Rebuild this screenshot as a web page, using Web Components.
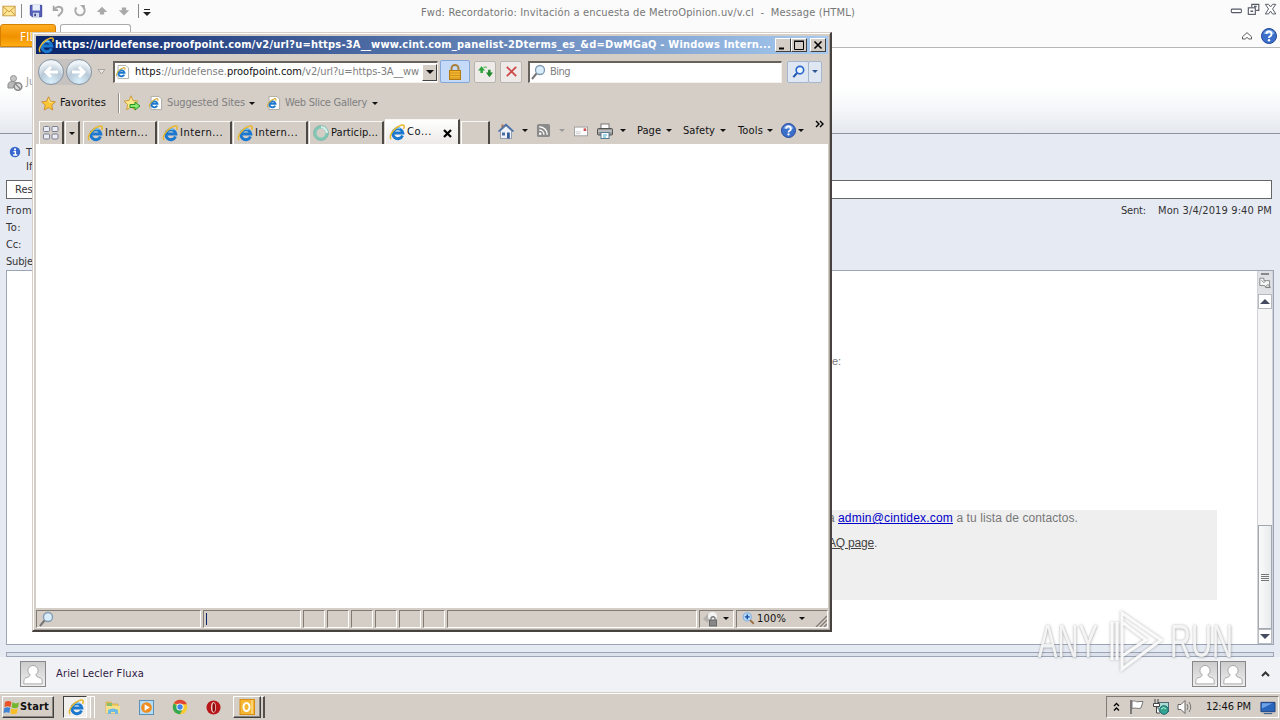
<!DOCTYPE html>
<html lang="en">
<head>
<meta charset="utf-8">
<title>Desktop</title>
<style>
  html, body { margin: 0; width: 1280px; height: 720px; overflow: hidden; }
  body { font: 11px/14px "DejaVu Sans Condensed", "DejaVu Sans", sans-serif; color: #111; }
</style>
</head>
<body>
<desk-top></desk-top>

<script>
const ICONS = {
  ie: `<path d="M13.500 11.500A5 5 0 1 1 13.800 9H5" fill="none" stroke="#1b78cf" stroke-width="3"/><path d="M4.500 6.500a5 5 0 0 1 7-1.800" stroke="#6cc4fb" stroke-width="1.400" fill="none"/><path d="M2.300 15.200C-1.500 12.500 6 2.500 13 1c3-.5 2.600 2 1.500 4" fill="none" stroke="#e9b72c" stroke-width="1.500"/>`,
  iepage: `<path d="M3.500.5h9l3 3v12h-12z" fill="#fff" stroke="#a7a7a0"/><path d="M10.500 11A3.500 3.500 0 1 1 10.800 8.800H5" fill="none" stroke="#1c78cc" stroke-width="2.200"/><path d="M2 13C0 11 5 4 10 3c2 0 1.500 2 1 3" fill="none" stroke="#d5b244" stroke-width="1.200"/>`,
  star: `<path d="M8 .8l2.200 4.800 5.200.6-3.900 3.500 1.100 5.300L8 12.400 3.400 15l1.100-5.300L.6 6.200l5.200-.6z" fill="#fcc536" stroke="#c9872a" stroke-width=".9"/><path d="M8 3l1 3.500 3 .5" stroke="#fff0a8" fill="none"/>`,
  staradd: `<path d="M7 .8l2 4.700 5 .6-3.700 3.400 1 5.200L7 12.200 2.600 14.700l1-5.200L0 6.100l5-.6z" fill="#fde78b" stroke="#cb9530" stroke-width=".9"/><path d="M6 9.500h5V7l5 4-5 4v-2.500H6z" fill="#8be870" stroke="#279323"/>`,
  quad: `<g fill="#ecedf2" stroke="#7a7f93"><rect x=".5" y="1.500" width="6" height="5" rx="1"/><rect x="9" y="1.500" width="6" height="5" rx="1"/><rect x=".5" y="9" width="6" height="5" rx="1"/><rect x="9" y="9" width="6" height="5" rx="1"/></g>`,
  ring: `<circle cx="8" cy="8" r="6" fill="none" stroke="#80c8b5" stroke-width="3"/><path d="M8 2a6 6 0 0 1 6 6" fill="none" stroke="#d3eee9" stroke-width="2.500"/><circle cx="8" cy="8" r="7.500" fill="none" stroke="#68a997" stroke-width=".5"/>`,
  lock: `<path d="M4.500 7V4.500a3.500 3.500 0 0 1 7 0V7" fill="none" stroke="#a9813b" stroke-width="2"/><rect x="2.500" y="6.500" width="11" height="9" fill="#f2b62d" stroke="#b57a12"/><path d="M3 9h10M3 11.500h10M3 14h10" stroke="#c98b1c" stroke-width=".8"/>`,
  refresh: `<path d="M0 7L3.800 2.500 7.500 7H5.200v2.500H2.600V7z" fill="#2da43a"/><path d="M6 3.500h3.500" stroke="#6fc46d" stroke-width="1.500"/><path d="M16 9L12.200 14 8.500 9h2.300V6h2.600v3z" fill="#21882e"/>`,
  stop: `<path d="M3 3l10 10M13 3L3 13" stroke="#ce4b4b" stroke-width="2"/>`,
  lens: `<circle cx="10" cy="6" r="4.500" fill="#d9edfb" stroke="#7f9ab0" stroke-width="1.300"/><path d="M6.500 9.500L2 15" stroke="#777" stroke-width="2"/>`,
  lensblue: `<circle cx="9.500" cy="6.500" r="4" fill="#eef6ff" stroke="#2b6acc" stroke-width="1.800"/><path d="M6.500 9.500L2.500 14" stroke="#2357ae" stroke-width="2.200"/>`,
  home: `<path d="M2.500 8v7.500h11V8L8 3z" fill="#eef2f8" stroke="#7d8ba5" stroke-width=".8"/><path d="M.5 8.500L8 1.500l7.500 7" fill="none" stroke="#3f6ba8" stroke-width="1.600"/><path d="M3.500 5V1.500h2V3" fill="#a46c4b"/><rect x="4" y="9.500" width="3" height="3" fill="#4b6f9f"/><rect x="9" y="9.500" width="2.800" height="6" fill="#345c98"/>`,
  rss: `<rect x="1" y="1" width="14" height="14" rx="2" fill="#8b8b8b"/><circle cx="4.500" cy="11.500" r="1.400" fill="#fff"/><path d="M3.500 7.500a5 5 0 0 1 5 5M3.500 4a8.500 8.500 0 0 1 8.500 8.500" fill="none" stroke="#fff" stroke-width="1.500"/>`,
  mail: `<rect x=".5" y="3.500" width="15" height="10" fill="#fdfdfd" stroke="#999"/><path d="M2 9h6M2 11h5" stroke="#ccc"/><path d="M11 5h3v3h-3z" fill="#cd4d53"/>`,
  print: `<rect x="4" y="1" width="8" height="5" fill="#fff" stroke="#777"/><rect x=".5" y="5.500" width="15" height="6.500" rx="1" fill="#999" stroke="#555"/><path d="M1 8h14" stroke="#ddd"/><rect x="4" y="9.500" width="8" height="6" fill="#fff" stroke="#557b93"/><path d="M6 12h4M6 14h3" stroke="#4aabca"/>`,
  help: `<circle cx="8" cy="8" r="7.500" fill="#3b6fc9" stroke="#26499a"/><path d="M2.500 6a5.800 5.800 0 0 1 11 0" fill="#81abea"/><path d="M5.500 6a2.500 2.500 0 1 1 3.500 2.300q-1 .5-1 1.700" fill="none" stroke="#fff" stroke-width="1.900"/><circle cx="8" cy="12.200" r="1.200" fill="#fff"/>`,
  info: `<circle cx="8" cy="8" r="7" fill="#3a67cd"/><circle cx="8" cy="4.500" r="1.400" fill="#fff"/><path d="M6 7.500h2.500V12M5.500 12h5.500" stroke="#fff" stroke-width="1.800" fill="none"/>`,
  envelope: `<rect x="1" y="2.500" width="14" height="11" fill="#ffe796" stroke="#c5973d"/><path d="M1 3l7 6 7-6M1 13l5-5.500M15 13l-5-5.500" fill="none" stroke="#c98f32"/>`,
  save: `<path d="M1.500 1.500h13v13h-11l-2-2z" fill="#555fbb" stroke="#333f93"/><rect x="4" y="1" width="8.500" height="6.500" fill="#e9eefc"/><rect x="4.500" y="10" width="7" height="5" fill="#cdd4ec"/><path d="M6 11h2v3H6z" fill="#3b438c"/>`,
  undo: `<path d="M3 2v5h5" fill="none" stroke="#a3a3a3" stroke-width="2"/><path d="M3.500 6C8 1.500 13 3 13 7c0 3-3 4.500-5 7" fill="none" stroke="#a9a9a9" stroke-width="2.300"/>`,
  redo: `<path d="M4 4a5.300 5.300 0 1 0 8 0" fill="none" stroke="#acacac" stroke-width="2.400"/><path d="M8 1h5.500v5.500z" fill="#a7a7a7"/>`,
  up: `<path d="M2 9l6-6 6 6h-3.500v3h-5V9z" fill="#a9a9a9"/>`,
  down: `<path d="M2 7l6 6 6-6h-3.500V4h-5v3z" fill="#a9a9a9"/>`,
  junk: `<circle cx="6.500" cy="3.500" r="3" fill="#c6c6c6" stroke="#929292"/><path d="M1 13V9q1-3 5-2.500l4 1.500-4 5z" fill="#b9b9b9" stroke="#8f8f8f"/><circle cx="11" cy="11.500" r="3.800" fill="#ddd" stroke="#888" stroke-width="1.500"/><path d="M8.500 9l5 5" stroke="#888" stroke-width="1.300"/>`,
  person: `<path d="M5.800 8c0 2-1 2.300-3 2.800-1.200.4-1.500 1.400-1.500 4.400h13.400c0-3-.3-4-1.500-4.400-2-.5-3-.8-3-2.800" fill="#fff" stroke="#999" stroke-width=".6"/><circle cx="8" cy="5.500" r="3.700" fill="#fff" stroke="#999" stroke-width=".6"/><path d="M6.300 7.500h3.400v3H6.300z" fill="#fff"/>`,
  flagwin: `<path d="M1 3q3.500-2 6.500 0L6.500 8Q4 6.500.5 8z" fill="#e85229"/><path d="M8.500 3.300q3 2 6.500.3l-1 5q-3.500 1.500-6.500-.3z" fill="#74b72f"/><path d="M.3 9Q4 7.500 6.300 9l-1 5Q3 12.500-.5 14z" fill="#3f83d4"/><path d="M7.300 9.300q3 1.800 6.500.3l-1 5q-3.500 1.500-6.500-.3z" fill="#f7bf27"/>`,
  folder: `<path d="M1 3h5l1 2h6v9H1z" fill="#f0cd61" stroke="#d4a83c" stroke-width=".7"/><path d="M2 4h5v3H2z" fill="#86bd6f"/><path d="M1 7h14v7H1z" fill="#f7e08d"/><path d="M3 15v-4q5-3 10 0v4h-3v-2H6v2z" fill="#6dbae2"/>`,
  media: `<rect x=".5" y=".5" width="15" height="15" fill="#b5dcf6" stroke="#548cb7"/><circle cx="8" cy="8" r="5.700" fill="#ef8c1e"/><path d="M6 4.500v7L11.500 8z" fill="#fff"/>`,
  chrome: `<circle cx="8" cy="8" r="6.500" fill="#f6ca30"/><path d="M2.400 4.800A6.500 6.500 0 0 1 14 5.500H8z" fill="#e04436"/><path d="M2.400 4.800A6.500 6.500 0 0 0 8 14.500l2.500-5z" fill="#35a853"/><circle cx="8" cy="8" r="3.200" fill="#fff"/><circle cx="8" cy="8" r="2.400" fill="#4285e8"/>`,
  opera: `<circle cx="8" cy="8" r="7.500" fill="#b91619"/><ellipse cx="8" cy="8" rx="2.600" ry="5.500" fill="#f3dfd9"/><ellipse cx="8.300" cy="8" rx="1.500" ry="4.800" fill="#8c080d"/>`,
  outlook: `<rect x="1" y=".5" width="14.500" height="15" fill="#f7b632" stroke="#d98d12"/><ellipse cx="7.500" cy="8" rx="3" ry="4" fill="none" stroke="#fff" stroke-width="2"/><path d="M13 1v14" stroke="#fff0b7"/>`,
  flag: `<path d="M3 1v14" stroke="#666" stroke-width="1.600"/><path d="M4 2.500c3-2 4 1.500 7 0h4L13 9c-3 1.500-5-1-9 .5z" fill="#fff" stroke="#777"/>`,
  network: `<rect x="5" y="3.500" width="10.500" height="9" fill="#a7ddd0" stroke="#567"/><path d="M2 0v5M5 0v5M.5 4.500h6v3h-6zM3.500 8v6H7" fill="#fff" stroke="#444"/><circle cx="11" cy="11" r="4.300" fill="#35a48e" stroke="#267"/><path d="M8 10q3-3 5 0" stroke="#b5f5d9" fill="none"/>`,
  sound: `<path d="M1 5.500h3L8 1.500v13l-4-4H1z" fill="#fff" stroke="#666"/><path d="M10 5q2 3 0 6M12 3q3.500 5 0 10" fill="none" stroke="#777"/>`,
  monitor: `<path d="M1 2.500h15v10H1z" fill="#2b66bd" stroke="#173d79"/><path d="M2 3.500h11L2 9z" fill="#6ea3e8"/><path d="M4 14.500h9" stroke="#284e81"/>`,
  shield: `<path d="M0 8l5-5.500V5h3v5H5v2z" fill="#b4b1ae"/><circle cx="9.500" cy="5.500" r="4.500" fill="#f3f3f3"/><rect x="6.500" y="9" width="7" height="6" fill="#888" stroke="#666"/><path d="M8 9V7q2-2.500 4 0v2" fill="none" stroke="#777" stroke-width="1.300"/>`,
  zoom: `<circle cx="6.500" cy="6" r="5" fill="#b7dbff" stroke="#70a4d9"/><path d="M6.500 3v6M3.500 6h6" stroke="#174e9e" stroke-width="1.800"/><path d="M10 10l4.500 4.500" stroke="#9c7048" stroke-width="2.400"/>`,
  min: `<rect x="1.500" y="7" width="11.500" height="4" rx="1" fill="#fff" stroke="#555966" stroke-width="1.200"/>`,
  restore: `<path d="M5.500 5V1.500h8v7h-3" fill="#fff" stroke="#555966" stroke-width="1.300"/><rect x="1.500" y="5.500" width="8" height="7.500" fill="#fff" stroke="#555966" stroke-width="1.300"/><path d="M4 9.500h3M8 4h3" stroke="#555966" stroke-width="1.600"/>`,
  close: `<path d="M1.500 1.500h3.700L7.500 4.500l2.300-3h3.700L9.800 6.800l3.700 5.700H9.800L7.500 9.300l-2.300 3.200H1.500l3.700-5.700z" fill="#fff" stroke="#555966" stroke-width="1.100"/>`,
  collapse: `<path d="M2 9l6-5.500L14 9v3h-3.500L8 9.800 5.500 12H2z" fill="#fff" stroke="#555" stroke-width="1.300"/>`,
  ruler: `<path d="M1 1.500h5v3h7v8H8l-1-2H1z" fill="#f5f5f5" stroke="#777"/><path d="M3 4l3 3 2-2M8 12l3-3 3 4H8" fill="none" stroke="#777"/>`
};

class UiIcon extends HTMLElement {
  constructor() {
    super();
    this.attachShadow({ mode: 'open' });
  }

  connectedCallback() {
    const size = this.getAttribute('size') || 16;
    this.shadowRoot.innerHTML = `
      <style>:host { display: block; flex: none; width: ${size}px; height: ${size}px; } svg { display: block; overflow: visible; }</style>
      <svg width="${size}" height="${size}" viewBox="0 0 16 16">${ICONS[this.getAttribute('name')] || ''}</svg>`;
  }
}
customElements.define('ui-icon', UiIcon);

// Small solid triangle used by every menu button
class UiArrow extends HTMLElement {
  constructor() {
    super();
    this.attachShadow({ mode: 'open' });
    this.shadowRoot.innerHTML = `
      <style>
        :host { display: block; flex: none; width: 0; height: 0; border: 3px solid transparent; border-top-color: currentColor; border-bottom: 0; }
        :host([up]) { border: 5px solid transparent; border-bottom-color: currentColor; border-top: 0; }
        :host([big]) { border-width: 5px 5px 0; }
      </style>`;
  }
}
customElements.define('ui-arrow', UiArrow);

// A single line label; spreads its letters so that it fills the given width
class UiLabel extends HTMLElement {
  constructor() {
    super();
    this.attachShadow({ mode: 'open' });
    this.shadowRoot.innerHTML = '<style>:host { display: block; flex: none; } span { display: block; width: max-content; white-space: pre; }</style><span><slot></slot></span>';
  }

  connectedCallback() {
    const width = Number(this.getAttribute('w'));
    if (!width) return;
    const span = this.shadowRoot.querySelector('span');
    const natural = span.getBoundingClientRect().width;
    span.style.letterSpacing = `${(width - natural) / this.textContent.length}px`;
    this.style.width = `${width}px`;
  }
}
customElements.define('ui-label', UiLabel);

class MailRibbon extends HTMLElement {
  constructor() {
    super();
    this.attachShadow({ mode: 'open' });
  }

  connectedCallback() {
    this.shadowRoot.innerHTML = `
      <style>
        :host { display: block; background: #fbfbfb; height: 134px; }
        .quick { display: grid; grid-template-columns: 421px 1fr auto; height: 24px; align-items: center; }
        .tools, .win { display: flex; align-items: center; }
        .tools { height: 20px; padding: 0 0 2px 2px; }
        .bar { width: 1px; height: 14px; background: #888; }
        .title { color: #777; padding-top: 1px; }
        .win { gap: 3px; padding-right: 2px; margin-top: -5px; }
        .tabs { display: flex; height: 23px; }
        .file { box-sizing: border-box; width: 56px; padding: 5px 0 0 19px; color: #fff; font-size: 12px; background: linear-gradient(#ffad22, #f09100 55%, #ffae16); border: 1px solid #d58000; border-radius: 3px 3px 0 0; }
        .tab { box-sizing: border-box; width: 71px; margin-left: 4px; border: 1px solid #aaa; border-bottom: 0; border-radius: 3px 3px 0 0; background: #fff; }
        .right { display: flex; align-items: center; gap: 8px; margin-left: auto; padding-right: 3px; }
        .body { box-sizing: border-box; height: 87px; border-top: 1px solid #b6b6b6; border-bottom: 1px solid #8d939d; background: linear-gradient(#fff 45%, #f5f7f9 70%, #e5e9ef); padding: 27px 0 0 7px; display: flex; gap: 3px; color: #999; }
      </style>
      <div class="quick">
        <div class="tools">
          <ui-icon name="envelope" size="14"></ui-icon>
          <div class="bar" style="margin: 0 7px 0 5px"></div>
          <ui-icon name="save" size="14"></ui-icon>
          <ui-icon name="undo" size="14" style="margin-left: 8px"></ui-icon>
          <ui-icon name="redo" size="14" style="margin-left: 8px"></ui-icon>
          <ui-icon name="up" size="14" style="margin-left: 8px"></ui-icon>
          <ui-icon name="down" size="14" style="margin-left: 8px"></ui-icon>
          <div class="bar" style="margin: 0 4px 0 7px"></div>
          <svg width="8" height="8" style="margin-top: 3px"><path d="M1 .5h6" stroke="#222"/><path d="M0 3h8L4 7z" fill="#222"/></svg>
        </div>
        <ui-label class="title" w="434">Fwd: Recordatorio: Invitación a encuesta de MetroOpinion.uv/v.cl  -  Message (HTML)</ui-label>
        <div class="win"><ui-icon name="min" size="14"></ui-icon><ui-icon name="restore" size="14"></ui-icon><ui-icon name="close" size="14"></ui-icon></div>
      </div>
      <div class="tabs">
        <div class="file">FILE</div><div class="tab"></div>
        <div class="right"><ui-icon name="collapse" size="12"></ui-icon><ui-icon name="help" size="16"></ui-icon></div>
      </div>
      <div class="body"><ui-icon name="junk" size="16"></ui-icon><span>Ju</span></div>`;
  }
}
customElements.define('mail-ribbon', MailRibbon);

class MailHeader extends HTMLElement {
  constructor() {
    super();
    this.attachShadow({ mode: 'open' });
  }

  connectedCallback() {
    this.shadowRoot.innerHTML = `
      <style>
        :host { display: block; height: 136px; color: #333; }
        .info { display: flex; height: 34px; padding: 12px 0 0 9px; gap: 5px; }
        .respond { margin: 0 8px 0 6px; height: 17px; line-height: 18px; border: 1px solid #666; background: #fff; padding-left: 8px; }
        .fields { display: grid; grid-template-columns: auto auto; justify-content: space-between; grid-auto-rows: 17px; align-items: center; padding: 3px 8px 0 6px; }
        .sent { display: flex; gap: 12px; }
      </style>
      <div class="info"><ui-icon name="info" size="12"></ui-icon><div>T<br>If</div></div>
      <div class="respond">Res</div>
      <div class="fields">
        <ui-label w="30">From:</ui-label>
        <div class="sent"><ui-label w="25">Sent:</ui-label><ui-label w="114">Mon 3/4/2019 9:40 PM</ui-label></div>
        <ui-label w="15">To:</ui-label><i></i>
        <ui-label w="15">Cc:</ui-label><i></i>
        <ui-label w="39">Subject:</ui-label>
      </div>`;
  }
}
customElements.define('mail-header', MailHeader);

class MailReader extends HTMLElement {
  constructor() {
    super();
    this.attachShadow({ mode: 'open' });
  }

  connectedCallback() {
    this.shadowRoot.innerHTML = `
      <style>
        :host { box-sizing: border-box; display: flex; height: 375px; margin: 0 6px 0 6px; border: 1px solid #9ba5b6; background: #fff; font: 12px/14px "Liberation Sans", Arial, sans-serif; color: #777; }
        .page { flex: 1; padding: 83px 40px 0 41px; }
        .line { padding-left: 784px; height: 14px; font-size: 11px; }
        .foot { box-sizing: border-box; height: 90px; margin-top: 142px; background: #efefef; padding: 1px 0 0 780px; }
        .foot div { display: flex; height: 25px; }
        .mail { color: #0000c8; text-decoration: underline; }
        .faq { color: #444; text-decoration: underline; }
        .scroll { width: 14px; display: flex; flex-direction: column; background: #f5f5f6; border: 1px solid #d1d3d8; border-width: 0 1px; }
        .top { height: 23px; background: #dfe1e5; display: flex; flex-direction: column; align-items: center; gap: 2px; }
        .top i { width: 8px; height: 2px; margin-top: 2px; background: #888; }
        .btn { box-sizing: border-box; height: 15px; border: 1px solid #b6b9c0; background: #fff; color: #444c61; display: flex; align-items: center; justify-content: center; }
        .thumb { box-sizing: border-box; height: 104px; margin-top: auto; border: 1px solid #a3a8ae; background: linear-gradient(90deg, #fafafa, #e8ebed); display: flex; flex-direction: column; align-items: center; justify-content: center; gap: 1px; }
        .thumb i { width: 8px; height: 1px; background: #777; }
      </style>
      <div class="page">
        <div class="line">e:</div>
        <div class="foot">
          <div><ui-label w="10">a </ui-label><ui-label class="mail" w="115">admin@cintidex.com</ui-label><ui-label w="125"> a tu lista de contactos.</ui-label></div>
          <div><ui-label class="faq" w="46">AQ page</ui-label>.</div>
        </div>
      </div>
      <div class="scroll">
        <div class="top"><i></i><ui-icon name="ruler" size="13"></ui-icon></div>
        <div class="btn"><ui-arrow up></ui-arrow></div>
        <div class="thumb"><i></i><i></i><i></i><i></i></div>
        <div class="btn"><ui-arrow big></ui-arrow></div>
      </div>`;
  }
}
customElements.define('mail-reader', MailReader);

class PeoplePane extends HTMLElement {
  constructor() {
    super();
    this.attachShadow({ mode: 'open' });
  }

  connectedCallback() {
    this.shadowRoot.innerHTML = `
      <style>
        :host { display: flow-root; height: 47px; }
        .split { height: 3px; margin: 7px 6px 0; border: 1px solid #9ba5b6; background: #dce1ec; }
        .row { box-sizing: border-box; display: flex; align-items: center; height: 35px; padding: 0 10px 1px 20px; background: #f0f2f6; color: #312043; }
        .face { box-sizing: border-box; width: 26px; height: 26px; padding: 1px; border: 1px solid #888; background: linear-gradient(#ccc, #eee); }
      </style>
      <div class="split"></div>
      <div class="row">
        <div class="face"><ui-icon name="person" size="22"></ui-icon></div>
        <ui-label w="88" style="margin-left: 10px">Ariel Lecler Fluxa</ui-label>
        <div class="face" style="margin-left: auto"><ui-icon name="person" size="22"></ui-icon></div>
        <div class="face" style="margin: 0 15px 0 2px"><ui-icon name="person" size="22"></ui-icon></div>
        <svg width="9" height="6" viewBox="0 0 9 6"><path d="M1 5l3.500-3.500L8 5" fill="none" stroke="#333" stroke-width="2"/></svg>
      </div>`;
  }
}
customElements.define('people-pane', PeoplePane);

class BrowserTab extends HTMLElement {
  constructor() {
    super();
    this.attachShadow({ mode: 'open' });
  }

  connectedCallback() {
    const icon = this.getAttribute('icon');
    this.shadowRoot.innerHTML = `
      <style>
        :host { box-sizing: border-box; display: flex; flex: none; align-items: center; height: 23px; margin-top: 2px; border-top: 1px solid #f8f6f2; border-left: 1px solid #fff; border-right: 2px solid #4c4844; padding: 0 0 0 3px; gap: 2px; background: #d3cdc6; }
        :host([active]) { height: 25px; margin-top: 0; background: linear-gradient(#fff, #ece9e6); }
        .x { margin: 2px 0 0 9px; }
      </style>
      ${icon ? `<ui-icon name="${icon}" size="16"></ui-icon>` : ''}
      <slot></slot>
      ${this.hasAttribute('active') ? '<svg class="x" width="9" height="9"><path d="M1 1l7 7M8 1L1 8" stroke="#000" stroke-width="2.200"/></svg>' : ''}`;
  }
}
customElements.define('browser-tab', BrowserTab);

class BrowserWindow extends HTMLElement {
  constructor() {
    super();
    this.attachShadow({ mode: 'open' });
  }

  connectedCallback() {
    this.shadowRoot.innerHTML = `
      <style>
        :host { box-sizing: border-box; display: flex; flex-direction: column; width: 800px; height: 600px; background: #d5cec7; border: 1px solid #d5cec7; border-right: 2px solid #45423f; border-bottom: 2px solid #45423f; box-shadow: inset 1px 1px #fff, inset -1px -1px #aaa49d; padding: 3px 2px 2px 3px; }
        .row { display: flex; align-items: center; flex: none; }
        .title { height: 18px; padding: 0 2px 0 2px; background: linear-gradient(90deg, #0a246a, #a6caf0); color: #fff; font-weight: bold; gap: 1px; }
        .cap { box-sizing: border-box; width: 16px; height: 14px; background: #d5cec7; border: 1px solid; border-color: #fff #404040 #404040 #fff; display: flex; align-items: center; justify-content: center; }
        .nav { height: 35px; padding-left: 2px; }
        .pair { display: flex; gap: 2px; height: 26px; align-items: center; border-radius: 14px; background: #c6c2c0; }
        .round { box-sizing: border-box; width: 26px; height: 26px; border: 1.500px solid #8796a5; border-radius: 50%; background: radial-gradient(circle at 50% 90%, #d7effb, #bac9d7 45%, #eef4f8 75%); display: flex; align-items: center; justify-content: center; }
        .box { box-sizing: border-box; height: 22px; background: #fff; border: 1px solid; border-color: #68625d #f4f1ec #f4f1ec #68625d; border-top-width: 2px; border-left-width: 2px; display: flex; align-items: center; }
        .address { width: 325px; margin-left: 7px; overflow: hidden; }
        .g { color: #808080; }
        .drop { box-sizing: border-box; width: 15px; height: 17px; margin-left: auto; background: #d5cec7; border: 1px solid; border-color: #fff #444 #444 #fff; display: flex; align-items: center; justify-content: center; }
        .btn { box-sizing: border-box; width: 22px; height: 22px; border: 1px solid #b8b4b0; border-radius: 2px; background: #edeae8; display: flex; align-items: center; justify-content: center; }
        .lock { width: 30px; height: 23px; border-color: #86a8d8; background: #c4daf8; }
        .favs { height: 30px; padding: 0 0 2px 5px; box-sizing: border-box; }
        .rule { width: 1px; height: 20px; background: #938d87; border-right: 1px solid #fff; }
        .tabs { height: 25px; align-items: flex-start; padding-left: 3px; }
        .mini { box-sizing: border-box; height: 23px; margin-top: 2px; border: 1px solid #fff; border-right: 2px solid #4c4844; border-bottom: 0; display: flex; align-items: center; justify-content: center; }
        .cmd { display: flex; align-items: center; height: 23px; }
        .view { flex: 1; background: #fff; }
        .status { height: 20px; gap: 2px; padding-top: 1px; box-sizing: border-box; }
        .cell { box-sizing: border-box; height: 18px; border: 1px solid; border-color: #817b75 #fff #fff #817b75; display: flex; align-items: center; }
      </style>
      <div class="row title">
        <ui-icon name="ie" size="16"></ui-icon>
        <ui-label w="716">https://urldefense.proofpoint.com/v2/url?u=https-3A__www.cint.com_panelist-2Dterms_es_&amp;d=DwMGaQ - Windows Intern...</ui-label>
        <div class="cap" style="margin-left: auto; margin-right: -1px"><svg width="10" height="10"><path d="M1 8.500h5" stroke="#000" stroke-width="2"/></svg></div>
        <div class="cap" style="margin-right: 2px"><svg width="10" height="10"><path d="M.5 1.500h9v8h-9zM0 1h10" fill="none" stroke="#000"/></svg></div>
        <div class="cap"><svg width="10" height="10"><path d="M1.500 1.500l7 7M8.500 1.500l-7 7" stroke="#000" stroke-width="1.600"/></svg></div>
      </div>
      <div class="row nav">
        <div class="pair">
          <div class="round"><svg width="16" height="14"><path d="M15 7H3M8 2L3 7l5 5" fill="none" stroke="#fff" stroke-width="3"/></svg></div>
          <div class="round"><svg width="16" height="14"><path d="M1 7h12M8 2l5 5-5 5" fill="none" stroke="#fff" stroke-width="3"/></svg></div>
        </div>
        <svg width="9" height="6" style="margin-left: 5px"><path d="M1 .5h7L4.500 5z" fill="#ece8e4" stroke="#aaa49e"/></svg>
        <div class="box address">
          <ui-icon name="iepage" size="14" style="margin: 0 6px 0 0"></ui-icon>
          <ui-label w="26">https</ui-label><ui-label class="g" w="66">://urldefense.</ui-label><ui-label w="75">proofpoint.com</ui-label><ui-label class="g" w="117">/v2/url?u=https-3A__ww</ui-label>
          <div class="drop"><ui-arrow style="border-width: 4px 4px 0"></ui-arrow></div>
        </div>
        <div class="btn lock" style="margin-left: 2px"><ui-icon name="lock" size="16"></ui-icon></div>
        <div class="btn" style="margin-left: 4px"><ui-icon name="refresh" size="15"></ui-icon></div>
        <div class="btn" style="margin-left: 4px"><ui-icon name="stop" size="15"></ui-icon></div>
        <div class="box" style="width: 254px; margin-left: 6px"><ui-icon name="lens" size="16"></ui-icon><ui-label class="g" w="20" style="margin-left: 4px">Bing</ui-label></div>
        <div class="btn" style="margin-left: 5px; border-color: #a5b6cd; background: #dfe7f3"><ui-icon name="lensblue" size="15"></ui-icon></div>
        <div class="btn" style="width: 14px; margin-left: -1px; border-color: #a5b6cd; background: #dfe7f3; color: #2b5795"><ui-arrow></ui-arrow></div>
      </div>
      <div class="row favs">
        <ui-icon name="star" size="15"></ui-icon>
        <ui-label w="46" style="margin: 0 12px 0 4px">Favorites</ui-label>
        <div class="rule"></div>
        <ui-icon name="staradd" size="16" style="margin-left: 4px"></ui-icon>
        <ui-icon name="iepage" size="14" style="margin-left: 8px"></ui-icon>
        <ui-label class="g" w="78" style="margin: 0 4px 0 5px">Suggested Sites</ui-label><ui-arrow></ui-arrow>
        <ui-icon name="iepage" size="14" style="margin-left: 11px"></ui-icon>
        <ui-label class="g" w="82" style="margin: 0 5px 0 5px">Web Slice Gallery</ui-label><ui-arrow></ui-arrow>
      </div>
      <div class="row tabs">
        <div class="mini" style="width: 25px"><ui-icon name="quad" size="16"></ui-icon></div>
        <div class="mini" style="width: 15px; margin-left: 1px"><ui-arrow></ui-arrow></div>
        <browser-tab icon="ie" style="width: 74px; margin-left: 3px"><ui-label w="43">Intern...</ui-label></browser-tab>
        <browser-tab icon="ie" style="width: 74px; margin-left: 1px"><ui-label w="43">Intern...</ui-label></browser-tab>
        <browser-tab icon="ie" style="width: 75px; margin-left: 1px"><ui-label w="43">Intern...</ui-label></browser-tab>
        <browser-tab icon="ring" style="width: 75px; margin-left: 1px"><ui-label w="47">Particip...</ui-label></browser-tab>
        <browser-tab icon="ie" active style="width: 75px; margin-left: 1px"><ui-label w="25">Co...</ui-label></browser-tab>
        <browser-tab style="width: 29px; margin-left: 1px"></browser-tab>
        <div class="cmd">
          <ui-icon name="home" size="16" style="margin-left: 8px"></ui-icon><ui-arrow style="margin-left: 8px"></ui-arrow>
          <ui-icon name="rss" size="15" style="margin-left: 8px"></ui-icon><ui-arrow style="margin-left: 8px; color: #999"></ui-arrow>
          <ui-icon name="mail" size="14" style="margin-left: 9px"></ui-icon>
          <ui-icon name="print" size="16" style="margin-left: 9px"></ui-icon><ui-arrow style="margin-left: 7px"></ui-arrow>
          <ui-label w="24" style="margin: 0 5px 0 11px">Page</ui-label><ui-arrow></ui-arrow>
          <ui-label w="32" style="margin: 0 5px 0 11px">Safety</ui-label><ui-arrow></ui-arrow>
          <ui-label w="25" style="margin: 0 4px 0 12px">Tools</ui-label><ui-arrow></ui-arrow>
          <ui-icon name="help" size="15" style="margin-left: 8px"></ui-icon><ui-arrow style="margin-left: 2px"></ui-arrow>
          <svg width="9" height="8" style="margin: -14px 0 0 11px"><path d="M1 1l3 3-3 3M5 1l3 3-3 3" fill="none" stroke="#000" stroke-width="1.400"/></svg>
        </div>
      </div>
      <div class="view"></div>
      <div class="row status">
        <div class="cell" style="width: 165px; padding-left: 1px"><ui-icon name="lens" size="16"></ui-icon></div>
        <div class="cell" style="width: 98px"><i style="width: 1px; height: 12px; margin-left: 2px; background: #0a246a"></i></div>
        <div class="cell" style="width: 22px"></div><div class="cell" style="width: 22px"></div><div class="cell" style="width: 22px"></div>
        <div class="cell" style="width: 22px"></div><div class="cell" style="width: 22px"></div><div class="cell" style="width: 22px"></div>
        <div class="cell" style="width: 250px"></div>
        <div class="cell" style="width: 35px; padding-left: 3px; gap: 4px"><ui-icon name="shield" size="16"></ui-icon><ui-arrow></ui-arrow></div>
        <div class="cell" style="flex: 1; padding-left: 5px"><ui-icon name="zoom" size="13"></ui-icon><ui-label w="29" style="margin: 0 13px 0 2px">100%</ui-label><ui-arrow></ui-arrow>
          <svg width="12" height="12" style="margin: 4px 0 0 auto"><path d="M1 12L12 1M5 12l7-7M9 12l3-3" stroke="#817b75" stroke-width="1.300"/></svg></div>
      </div>`;
  }
}
customElements.define('browser-window', BrowserWindow);

class TaskBar extends HTMLElement {
  constructor() {
    super();
    this.attachShadow({ mode: 'open' });
  }

  connectedCallback() {
    this.shadowRoot.innerHTML = `
      <style>
        :host { box-sizing: border-box; display: flex; align-items: center; height: 28px; padding: 1px 1px 0 2px; background: #d5cec7; border-top: 1px solid #d5cec7; box-shadow: inset 0 1px #fff; }
        .btn { box-sizing: border-box; height: 22px; display: flex; align-items: center; border: 1px solid; border-color: #fff #404040 #404040 #fff; box-shadow: inset -1px -1px #8a847e; }
        .down { border-color: #404040 #fff #fff #404040; background: #f2f0ed; box-shadow: none; }
        .edge { box-sizing: border-box; width: 4px; height: 22px; border-right: 2px solid #55504c; border-top: 1px solid #fff; }
        .tray { box-sizing: border-box; width: 173px; height: 22px; margin-left: auto; padding-left: 6px; display: flex; align-items: center; border: 1px solid; border-color: #817b75 #fff #fff #817b75; }
      </style>
      <div class="btn" style="width: 52px; padding-left: 1px; font-weight: bold"><ui-icon name="flagwin" size="16"></ui-icon><ui-label w="29">Start</ui-label></div>
      <div class="btn down" style="width: 24px; margin-left: 9px; padding-left: 4px"><ui-icon name="ie" size="16"></ui-icon></div>
      <div class="edge" style="border-right: 1px solid #fff; background: #e7e3df"></div><div class="edge" style="border-right: 1px solid #fff"></div>
      <ui-icon name="folder" size="16" style="margin-left: 10px"></ui-icon>
      <ui-icon name="media" size="15" style="margin-left: 18px"></ui-icon>
      <ui-icon name="chrome" size="18" style="margin-left: 17px"></ui-icon>
      <ui-icon name="opera" size="15" style="margin-left: 17px"></ui-icon>
      <div class="btn" style="width: 28px; margin-left: 12px; padding-left: 5px"><ui-icon name="outlook" size="16"></ui-icon></div><div class="edge"></div>
      <div class="tray">
        <svg width="7" height="10"><path d="M1 4l2.500-2.500L6 4M1 8.500L3.500 6 6 8.500" fill="none" stroke="#000" stroke-width="1.300"/></svg>
        <ui-icon name="flag" size="16" style="margin-left: 8px"></ui-icon>
        <ui-icon name="network" size="16" style="margin-left: 9px"></ui-icon>
        <ui-icon name="sound" size="16" style="margin-left: 8px"></ui-icon>
        <ui-label w="45" style="margin: 0 9px 0 13px">12:46 PM</ui-label>
        <ui-icon name="monitor" size="15"></ui-icon>
      </div>`;
  }
}
customElements.define('task-bar', TaskBar);

class WaterMark extends HTMLElement {
  constructor() {
    super();
    this.attachShadow({ mode: 'open' });
    this.shadowRoot.innerHTML = `
      <style>
        :host { display: flex; align-items: center; width: 194px; height: 64px; font: 47px/64px "Liberation Sans", Arial, sans-serif; color: rgba(255, 255, 255, .85); text-shadow: 0 0 3px rgba(100, 100, 100, .45), 1px 1px 3px rgba(100, 100, 100, .25); }
        svg { flex: none; margin: 0 6px 0 9px; filter: drop-shadow(0 0 1.500px rgba(90, 90, 90, .5)); }
        span { flex: none; width: 62px; }
        b { display: block; font-weight: normal; transform-origin: 0 50%; transform: scaleX(.62); white-space: nowrap; }
      </style>
      <span><b>ANY</b></span>
      <svg width="55" height="62" viewBox="0 0 55 62"><path d="M13 20V3l39 27-39 29V43M13 12v34l24-16zM3 12v38M8 12v38" fill="none" stroke="#fff" stroke-opacity=".9" stroke-width="3"/></svg>
      <span><b>RUN</b></span>`;
  }
}
customElements.define('water-mark', WaterMark);

class DeskTop extends HTMLElement {
  constructor() {
    super();
    this.attachShadow({ mode: 'open' });
  }

  connectedCallback() {
    this.shadowRoot.innerHTML = `
      <style>
        :host { display: block; position: relative; width: 1280px; height: 720px; background: #e6eaf3; overflow: hidden; }
        browser-window { position: absolute; left: 32px; top: 32px; }
        water-mark { position: absolute; left: 1038px; top: 609px; }
      </style>
      <mail-ribbon></mail-ribbon>
      <mail-header></mail-header>
      <mail-reader></mail-reader>
      <people-pane></people-pane>
      <task-bar></task-bar>
      <browser-window></browser-window>
      <water-mark></water-mark>`;
  }
}
customElements.define('desk-top', DeskTop);
</script>
</body>
</html>
